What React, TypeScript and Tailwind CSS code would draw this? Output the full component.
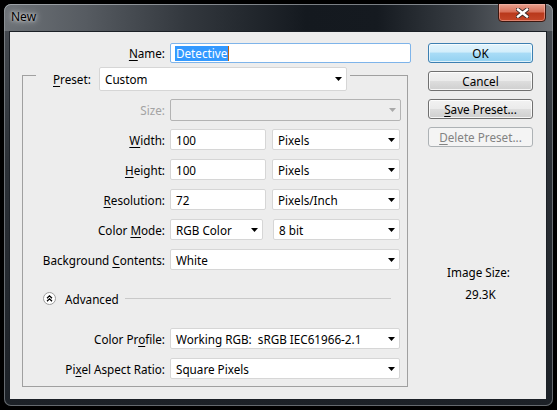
import React from "react";

function Arrow({ disabled }: { disabled?: boolean }) {
  return (
    <svg width="7" height="4" viewBox="0 0 7 4" className="shrink-0">
      <polygon points="0,0 7,0 3.5,4" fill={disabled ? "#a9a9a9" : "#000000"} />
    </svg>
  );
}

function Select({ value, className }: { value?: string; className: string }) {
  return (
    <div
      className={`flex items-center justify-between bg-white border border-[#d6d6d6] rounded-[2px] pl-[5px] pr-[4px] ${className}`}
    >
      <span className="whitespace-pre">{value}</span>
      <Arrow />
    </div>
  );
}

function Input({ value, className }: { value: string; className: string }) {
  return (
    <div className={`flex items-center bg-white border border-[#d6d6d6] rounded-[2px] pl-[5px] ${className}`}>
      <span>{value}</span>
    </div>
  );
}

function U({ children }: { children: React.ReactNode }) {
  return <span className="underline underline-offset-[2px] decoration-1">{children}</span>;
}

function Row({
  label,
  children,
  className,
  labelClass,
}: {
  label: React.ReactNode;
  children: React.ReactNode;
  className?: string;
  labelClass?: string;
}) {
  return (
    <div className={`flex items-center h-[21px] ${className ?? ""}`}>
      <div className={`w-[142px] text-right whitespace-nowrap ${labelClass ?? ""}`}>{label}</div>
      <div className="flex ml-[5px] h-[21px]">{children}</div>
    </div>
  );
}

function Button({
  children,
  variant,
}: {
  children: React.ReactNode;
  variant?: "default" | "disabled";
}) {
  if (variant === "default") {
    return (
      <div className="h-[20px] rounded-[3px] border border-[#3c7fb1] bg-[linear-gradient(180deg,#e3f4fc_0%,#d3eefb_45%,#a9dcf6_50%,#93d1f1_100%)] shadow-[inset_0_0_0_1px_rgba(255,255,255,0.7)] flex items-center justify-center text-black">
        {children}
      </div>
    );
  }
  if (variant === "disabled") {
    return (
      <div className="h-[20px] rounded-[3px] border border-[#adb2b5] bg-[#f4f4f4] flex items-center justify-center text-[#838383]">
        {children}
      </div>
    );
  }
  return (
    <div className="h-[20px] rounded-[3px] border border-[#707070] bg-[linear-gradient(180deg,#f2f2f2_0%,#ebebeb_48%,#dddddd_52%,#cfcfcf_100%)] shadow-[inset_0_0_0_1px_rgba(255,255,255,0.8)] flex items-center justify-center text-black">
      {children}
    </div>
  );
}

export default function App() {
  return (
    <div className="w-[557px] h-[410px] bg-black pt-[4px] pl-[4px] font-['Noto_Sans',sans-serif] text-[11.7px] leading-[16px] text-black overflow-hidden">
      <div className="w-[549px] h-[402px] rounded-[7px] bg-[linear-gradient(180deg,#4a4f55_0%,#2c3137_40%,#1c2127_100%)] shadow-[inset_0_0_0_1px_rgba(160,165,170,0.55)] flex flex-col overflow-hidden">
        {/* title bar */}
        <div className="h-[27px] shrink-0 flex items-start justify-between rounded-t-[7px] bg-[linear-gradient(90deg,#6d7277_0%,#565b61_15%,#33383e_33%,#14191f_55%,#151a20_68%,#3a3f45_84%,#6e7277_100%)] shadow-[inset_0_1px_0_rgba(190,195,200,0.6),inset_1px_0_0_rgba(170,175,180,0.5),inset_-1px_0_0_rgba(170,175,180,0.5)]">
          <div className="ml-[7px] mt-[5px] text-[12px] leading-[16px] text-black [text-shadow:0_0_7px_rgba(255,255,255,0.9),0_0_3px_rgba(255,255,255,0.7)]">
            New
          </div>
          <div className="mr-[7px] mt-[-1px] w-[48px] h-[19px] rounded-b-[4px] border border-[#3b1710] bg-[linear-gradient(180deg,#e7a08d_0%,#d8715a_45%,#b9391c_55%,#c4482a_100%)] shadow-[inset_0_0_0_1px_rgba(255,200,190,0.45)] flex items-center justify-center">
            <svg width="13" height="10" viewBox="0 0 13 10">
              <path d="M2 1.5 L11 8.5 M11 1.5 L2 8.5" stroke="#3a2a28" strokeWidth="4.2" strokeLinecap="square" />
              <path d="M2 1.5 L11 8.5 M11 1.5 L2 8.5" stroke="#ffffff" strokeWidth="2.4" strokeLinecap="square" />
            </svg>
          </div>
        </div>

        {/* client area */}
        <div className="ml-[5px] w-[538px] h-[369px] shrink-0 border border-[#1b2026] bg-[#ededed] flex pt-[11px]">
          {/* left column */}
          <div className="w-[401px] flex flex-col">
            <div className="flex items-center h-[20px]">
              <div className="w-[155px] text-right">
                <U>N</U>ame:
              </div>
              <div className="ml-[5px] w-[241px] h-[20px] bg-white border border-[#7eb4ea] rounded-[2px] flex items-center pl-[4px]">
                <span className="bg-[#3399ff] text-white px-px leading-[15px]">Detective</span>
                <span className="w-px h-[15px] bg-[#c06010]" />
              </div>
            </div>

            {/* group box */}
            <div className="mt-[12px] ml-[12px] w-[386px] border border-[#a0a0a0] flex flex-col pb-[7px]">
              <div className="-mt-[9px] ml-[13px] self-start flex items-center bg-[#ededed] pl-[17px] pr-[3px] h-[24px]">
                <div className="w-[40px] whitespace-nowrap">
                  <U>P</U>reset:
                </div>
                <Select value="Custom" className="ml-[6px] w-[248px] h-[24px]" />
              </div>

              <div className="flex items-center h-[21px] mt-[8px]">
                <div className="w-[142px] text-right text-[#a3a3a3]">Size:</div>
                <div className="ml-[5px] w-[231px] h-[22px] border border-[#b3b3b3] rounded-[2px] bg-[#ededed] flex items-center justify-end pr-[4px]">
                  <Arrow disabled />
                </div>
              </div>

              <Row label={<><U>W</U>idth:</>} className="mt-[9px]">
                <Input value="100" className="w-[96px]" />
                <Select value="Pixels" className="ml-[6px] w-[128px]" />
              </Row>
              <Row label={<><U>H</U>eight:</>} className="mt-[9px]">
                <Input value="100" className="w-[96px]" />
                <Select value="Pixels" className="ml-[6px] w-[128px]" />
              </Row>
              <Row label={<><U>R</U>esolution:</>} className="mt-[9px]">
                <Input value="72" className="w-[96px]" />
                <Select value="Pixels/Inch" className="ml-[6px] w-[128px]" />
              </Row>
              <Row label={<>Color <U>M</U>ode:</>} className="mt-[9px]">
                <Select value="RGB Color" className="w-[93px]" />
                <Select value="8 bit" className="ml-[10px] w-[127px]" />
              </Row>
              <Row label={<>Background <U>C</U>ontents:</>} className="mt-[9px]">
                <Select value="White" className="w-[230px]" />
              </Row>

              <div className="flex items-center h-[21px] mt-[18px] pl-[20px] pr-[16px]">
                <svg width="13" height="13" viewBox="0 0 13 13" className="shrink-0">
                  <circle cx="6.5" cy="6.5" r="6" fill="#ffffff" stroke="#9c9c9c" strokeWidth="1" />
                  <path d="M4 6.2 L6.5 3.8 L9 6.2 M4 9.2 L6.5 6.8 L9 9.2" fill="none" stroke="#000" strokeWidth="1.3" />
                </svg>
                <span className="ml-[9px]">Advanced</span>
                <div className="ml-[6px] flex-1 h-px bg-[#c9c9c9]" />
              </div>

              <Row label={<>Color Pr<U>o</U>file:</>} className="mt-[19px]">
                <Select value="Working RGB:  sRGB IEC61966-2.1" className="w-[230px]" />
              </Row>
              <Row label={<>Pi<U>x</U>el Aspect Ratio:</>} className="mt-[9px]">
                <Select value="Square Pixels" className="w-[230px]" />
              </Row>
            </div>
          </div>

          {/* right column */}
          <div className="ml-[17px] w-[105px] flex flex-col">
            <div className="flex flex-col gap-[8px]">
              <Button variant="default">OK</Button>
              <Button>Cancel</Button>
              <Button>
                <span>
                  <U>S</U>ave Preset...
                </span>
              </Button>
              <Button variant="disabled">
                <span>
                  <U>D</U>elete Preset...
                </span>
              </Button>
            </div>
            <div className="mt-[117px] text-center pr-[4px]">Image Size:</div>
            <div className="mt-[6px] text-center">29.3K</div>
          </div>
        </div>
      </div>
    </div>
  );
}
